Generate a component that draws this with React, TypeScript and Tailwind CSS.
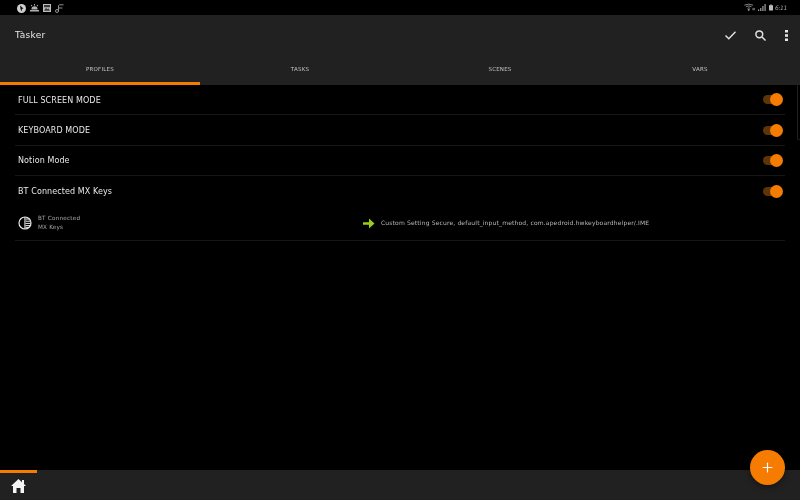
import { Plus } from 'lucide-react';

const FONT = "font-['DejaVu_Sans',sans-serif]";

const PROFILES = ['FULL SCREEN MODE', 'KEYBOARD MODE', 'Notion Mode', 'BT Connected MX Keys'];
const TABS = ['PROFILES', 'TASKS', 'SCENES', 'VARS'];

function Toggle() {
  return (
    <div className="relative h-[9px] w-[19px] rounded-full bg-[#5f3507]">
      <div className="absolute right-[-1px] top-[-2px] h-[13px] w-[13px] rounded-full bg-[#f57c00]" />
    </div>
  );
}

function StatusLeft() {
  return (
    <div className="flex items-center gap-[4px] pl-[17px] pt-[1px]">
      <svg width="9" height="9" viewBox="0 0 9 9">
        <circle cx="4.5" cy="4.5" r="4.5" fill="#cfcfcf" />
        <path d="M3 1.5 L6.5 4.5 L4.8 5 L5.2 7.5 L3.6 5.6 Z" fill="#111" />
      </svg>
      <svg width="9" height="8" viewBox="0 0 9 8">
        <path d="M1.4 5.4 A3.1 3.1 0 0 1 7.6 5.4 Z M0 6.1 H9 V7.6 H0 Z M4 0 H5 V1.4 H4 Z M0.8 1.4 L1.5 0.8 L2.4 1.8 L1.7 2.4 Z M7.5 0.8 L8.2 1.4 L7.3 2.4 L6.6 1.8 Z" fill="#b0b0b0" />
      </svg>
      <svg width="8" height="8" viewBox="0 0 8 8">
        <path d="M0 0 H8 V8 H0 Z" fill="#bdbdbd" />
        <path d="M1 6.8 L3 3.8 L4.5 5.2 L5.5 4.2 L7 6.8 Z M1 1 H7 V3.2 H1 Z" fill="#3a3a3a" />
      </svg>
      <svg width="9" height="9" viewBox="0 0 9 9" fill="none" stroke="#a0a0a0" strokeWidth="0.9">
        <circle cx="2" cy="7" r="1.5" />
        <path d="M3.5 7 V1.5 A1 1 0 0 1 4.5 0.8 H8.5 M3.5 4 H7.5" />
      </svg>
    </div>
  );
}

function StatusRight() {
  return (
    <div className="flex items-center gap-[2px] pr-[15px]">
      <svg width="11" height="9" viewBox="0 0 14 9" fill="none" stroke="#a8a8a8" strokeWidth="1">
        <path d="M0.5 1.5 Q6 -1 11.5 1.5 M2.5 3.5 Q6 1.5 9.5 3.5 M4.5 5.5 Q6 4.5 7.5 5.5" />
        <circle cx="6" cy="7.5" r="0.8" fill="#a8a8a8" />
        <path d="M11.5 5 V8 M13 5 V8" />
      </svg>
      <svg width="8" height="9" viewBox="0 0 10 9" className="ml-[1px]">
        <path d="M0 7 H1.5 V9 H0 Z M2.7 5 H4.2 V9 H2.7 Z M5.4 2.5 H6.9 V9 H5.4 Z M8.1 0 H9.6 V9 H8.1 Z" fill="#a0a0a0" />
      </svg>
      <svg width="4" height="9" viewBox="0 0 6 9" className="ml-[1px]">
        <path d="M2 0 H4 V1 H6 V9 H0 V1 H2 Z" fill="#bcbcbc" />
      </svg>
      <span className="w-[10px] whitespace-nowrap text-[6px] italic leading-none tracking-[-0.4px] text-[#a0a0a0] [will-change:opacity]">6:11</span>
    </div>
  );
}

export default function App() {
  return (
    <div className={`relative flex h-[500px] w-[800px] flex-col overflow-hidden bg-black ${FONT}`}>
      <div className="flex h-[15px] items-center justify-between bg-black">
        <StatusLeft />
        <StatusRight />
      </div>

      <header className="flex h-[70px] flex-col bg-[#212121]">
        <div className="flex h-[40px] items-center justify-between pl-[15px] pr-[12px]">
          <span className="pt-[1px] text-[9px] tracking-[0.3px] text-[#e8e8e8] [will-change:opacity]">Tàsker</span>
          <div className="flex items-center gap-[19px]">
            <svg width="11" height="9" viewBox="0 0 11 9" fill="none" stroke="#e2e2e2" strokeWidth="1.4">
              <path d="M0.5 4.5 L3.8 7.8 L10.5 0.8" />
            </svg>
            <svg width="11" height="11" viewBox="0 0 11 11" fill="none" stroke="#e2e2e2" strokeWidth="1.5">
              <circle cx="4.3" cy="4.3" r="3.4" />
              <path d="M6.8 6.8 L10.5 10.5" />
            </svg>
            <svg width="3" height="11" viewBox="0 0 3 11" fill="#e8e8e8">
              <path d="M0 0 H3 V2.6 H0 Z M0 4.2 H3 V6.8 H0 Z M0 8.4 H3 V11 H0 Z" />
            </svg>
          </div>
        </div>
        <div className="grid flex-1 grid-cols-4">
          {TABS.map((t, i) => (
            <div
              key={t}
              className={`flex items-start justify-center border-b-[3px] pt-[10px] ${i === 0 ? 'border-[#f57c00]' : 'border-transparent'}`}
            >
              <span className="text-[5.5px] leading-[9px] tracking-[0.2px] text-[#c4c4c4] [will-change:opacity]">{t}</span>
            </div>
          ))}
        </div>
      </header>

      <main className="flex-1 px-[15px] [will-change:opacity]">
        {PROFILES.map((p, i) => (
          <div
            key={p}
            className={`flex h-[30.4px] items-center justify-between pl-[3px] pr-[3px] ${i < 3 ? 'border-b border-[#161616]' : ''}`}
          >
            <span className="pt-[2px] text-[8px] tracking-[0.1px] text-[#e8e8e8]">{p}</span>
            <Toggle />
          </div>
        ))}
        <div className="flex h-[34px] items-center border-b border-[#161616] pl-[3px]">
          <svg width="14" height="14" viewBox="0 0 14 14" className="shrink-0">
            <circle cx="7" cy="7" r="6" fill="#000" stroke="#e8e8e8" strokeWidth="1.2" />
            <path d="M6.4 1 V13 H7.4 V1 Z" fill="#e8e8e8" />
            <path d="M7.4 3 H11 M7.4 5.2 H12.3 M7.4 7.4 H12.5 M7.4 9.6 H12 M7.4 11.4 H10.5" stroke="#e8e8e8" strokeWidth="1" />
          </svg>
          <div className="ml-[6px] flex w-[325px] flex-col gap-[2px] pb-[1px] text-[5.7px] leading-[7px] tracking-[0.2px] text-[#a8a8a8]">
            <span>BT Connected</span>
            <span>MX Keys</span>
          </div>
          <svg width="12" height="11" viewBox="0 0 12 11" className="shrink-0">
            <path d="M0 4.2 H6 V0.5 L11.5 5.5 L6 10.5 V6.8 H0 Z" fill="#9ccc1a" />
          </svg>
          <span className="ml-[6px] whitespace-nowrap pb-[1px] text-[6px] leading-[7px] tracking-[0.16px] text-[#b8b8b8]">
            Custom Setting Secure, default_input_method, com.apedroid.hwkeyboardhelper/.IME
          </span>
        </div>
      </main>

      <footer className="relative flex h-[30px] items-center bg-[#212121] pl-[11px]">
        <div className="absolute left-0 top-0 h-[2.5px] w-[37px] bg-[#f57c00]" />
        <svg width="15" height="14" viewBox="0 0 15 14" className="mt-[1px]">
          <path
            fillRule="evenodd"
            d="M7.5 0 L11 3.2 V1 H13 V5 L15 7 H13 V14 H9.5 V9 H5.5 V14 H2 V7 H0 Z"
            fill="#f5f5f5"
          />
        </svg>
      </footer>

      <div className="absolute left-[750px] top-[450px] flex h-[35px] w-[35px] items-center justify-center rounded-full bg-[#f57c00] shadow-[0_2px_6px_rgba(0,0,0,0.4)]">
        <Plus size={15} strokeWidth={1.8} color="#fff" />
      </div>

      <div className="absolute right-0 top-[85px] h-[55px] w-[3px] rounded-bl-[2px] border-b border-l border-[#1f1f1f]" />
    </div>
  );
}
